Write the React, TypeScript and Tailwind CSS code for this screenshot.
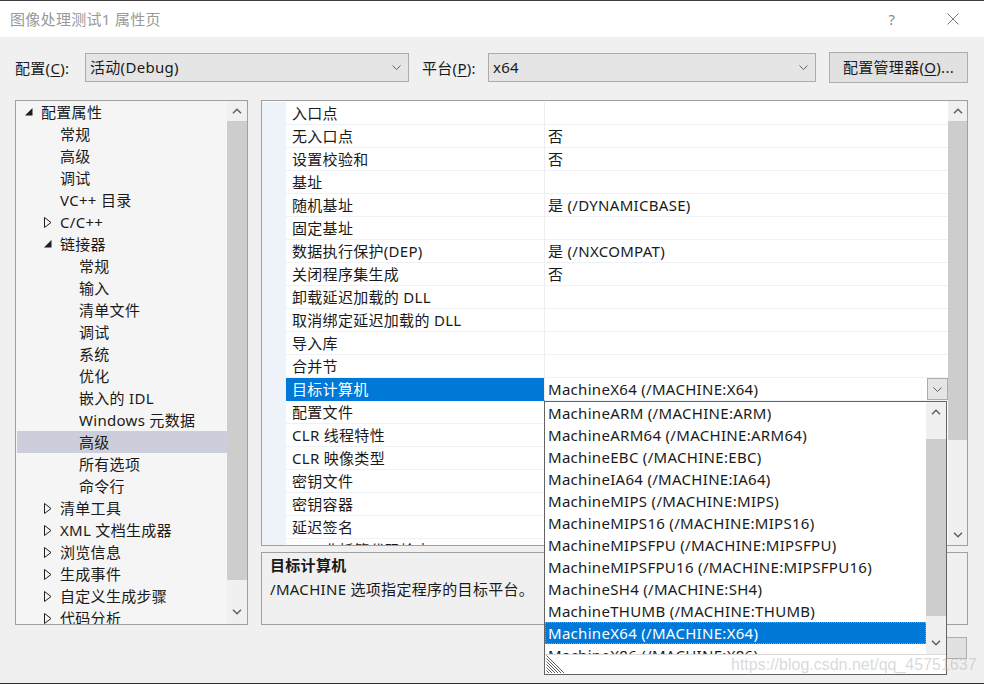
import React from "react";

const ChevUp = () => (
  <svg width="10" height="6" viewBox="0 0 10 6">
    <path d="M1 5.2 L5 1.2 L9 5.2" fill="none" stroke="#606060" strokeWidth="1.5" />
  </svg>
);
const ChevDown = () => (
  <svg width="10" height="6" viewBox="0 0 10 6">
    <path d="M1 0.8 L5 4.8 L9 0.8" fill="none" stroke="#606060" strokeWidth="1.5" />
  </svg>
);
const ThinDown = () => (
  <svg width="9" height="5" viewBox="0 0 9 5">
    <path d="M0.5 0.5 L4.5 4.5 L8.5 0.5" fill="none" stroke="#606060" strokeWidth="1" />
  </svg>
);
const TriExpanded = () => (
  <svg width="8" height="8" viewBox="0 0 8 8">
    <path d="M7.5 0 L7.5 7.5 L0 7.5 Z" fill="#1e1e1e" />
  </svg>
);
const TriCollapsed = () => (
  <svg width="8" height="11" viewBox="0 0 8 11">
    <path d="M0.5 0.5 L7 5.5 L0.5 10.5 Z" fill="none" stroke="#1e1e1e" strokeWidth="1" />
  </svg>
);

type TreeItem = { t: string; l: number; e?: "open" | "closed"; sel?: boolean };
const tree: TreeItem[] = [
  { t: "配置属性", l: 0, e: "open" },
  { t: "常规", l: 1 },
  { t: "高级", l: 1 },
  { t: "调试", l: 1 },
  { t: "VC++ 目录", l: 1 },
  { t: "C/C++", l: 1, e: "closed" },
  { t: "链接器", l: 1, e: "open" },
  { t: "常规", l: 2 },
  { t: "输入", l: 2 },
  { t: "清单文件", l: 2 },
  { t: "调试", l: 2 },
  { t: "系统", l: 2 },
  { t: "优化", l: 2 },
  { t: "嵌入的 IDL", l: 2 },
  { t: "Windows 元数据", l: 2 },
  { t: "高级", l: 2, sel: true },
  { t: "所有选项", l: 2 },
  { t: "命令行", l: 2 },
  { t: "清单工具", l: 1, e: "closed" },
  { t: "XML 文档生成器", l: 1, e: "closed" },
  { t: "浏览信息", l: 1, e: "closed" },
  { t: "生成事件", l: 1, e: "closed" },
  { t: "自定义生成步骤", l: 1, e: "closed" },
  { t: "代码分析", l: 1, e: "closed" },
];

const props: [string, string][] = [
  ["入口点", ""],
  ["无入口点", "否"],
  ["设置校验和", "否"],
  ["基址", ""],
  ["随机基址", "是 (/DYNAMICBASE)"],
  ["固定基址", ""],
  ["数据执行保护(DEP)", "是 (/NXCOMPAT)"],
  ["关闭程序集生成", "否"],
  ["卸载延迟加载的 DLL", ""],
  ["取消绑定延迟加载的 DLL", ""],
  ["导入库", ""],
  ["合并节", ""],
  ["目标计算机", "MachineX64 (/MACHINE:X64)"],
  ["配置文件", ""],
  ["CLR 线程特性", ""],
  ["CLR 映像类型", ""],
  ["密钥文件", ""],
  ["密钥容器", ""],
  ["延迟签名", ""],
  ["CLR 非托管代码检查", ""],
];

const machines = [
  "MachineARM (/MACHINE:ARM)",
  "MachineARM64 (/MACHINE:ARM64)",
  "MachineEBC (/MACHINE:EBC)",
  "MachineIA64 (/MACHINE:IA64)",
  "MachineMIPS (/MACHINE:MIPS)",
  "MachineMIPS16 (/MACHINE:MIPS16)",
  "MachineMIPSFPU (/MACHINE:MIPSFPU)",
  "MachineMIPSFPU16 (/MACHINE:MIPSFPU16)",
  "MachineSH4 (/MACHINE:SH4)",
  "MachineTHUMB (/MACHINE:THUMB)",
  "MachineX64 (/MACHINE:X64)",
  "MachineX86 (/MACHINE:X86)",
];

const levelPad = ["pl-[8px]", "pl-[27px]", "pl-[46px]"];

export default function App() {
  return (
    <div className="relative w-[984px] h-[684px] overflow-hidden bg-[#f0f0f0] border-t border-b border-t-[#3c3c3c] border-b-[#2e2e2e] font-['Noto_Sans','Noto_Sans_CJK_SC',sans-serif] text-[15px] tracking-[0.3px] text-[#1a1a1a]">
      {/* title bar */}
      <div className="h-[36px] bg-white flex items-center">
        <div className="pl-[10px] text-[#999999] leading-[20px]">图像处理测试1 属性页</div>
        <div className="flex-1" />
        <div className="w-[20px] text-center text-[#8a8a8a] mr-[45px] leading-[20px]">?</div>
        <div className="mr-[25px] flex items-center">
          <svg width="12" height="12" viewBox="0 0 12 12">
            <path d="M0.5 0.5 L11.5 11.5 M11.5 0.5 L0.5 11.5" stroke="#7a7a7a" strokeWidth="1" />
          </svg>
        </div>
      </div>

      {/* config row */}
      <div className="flex items-center h-[31px] mt-[15px] pl-[15px]">
        <div className="w-[70px] leading-[20px]">
          配置(<span className="underline underline-offset-2">C</span>):
        </div>
        <div className="w-[324px] h-[29px] bg-[#e5e5e5] border border-[#acacac] flex items-center pl-[4px] pr-[7px]">
          <span className="flex-1">活动(Debug)</span>
          <ThinDown />
        </div>
        <div className="w-[66px] ml-[13px] leading-[20px]">
          平台(<span className="underline underline-offset-2">P</span>):
        </div>
        <div className="w-[328px] h-[29px] bg-[#e5e5e5] border border-[#acacac] flex items-center pl-[4px] pr-[7px]">
          <span className="flex-1">x64</span>
          <ThinDown />
        </div>
        <div className="w-[139px] h-[31px] ml-[13px] bg-[#e1e1e1] border border-[#adadad] flex items-center justify-center">
          配置管理器(<span className="underline underline-offset-2">O</span>)...
        </div>
      </div>

      {/* main */}
      <div className="flex mt-[17px] pl-[15px] gap-[13px]">
        {/* tree */}
        <div className="w-[233px] h-[525px] border border-[#a0a0a0] bg-[#f5f5f5] flex">
          <div className="flex-1 overflow-hidden">
            {tree.map((it, i) => (
              <div
                key={i}
                className={`h-[22px] ml-[1px] flex items-center whitespace-nowrap ${levelPad[it.l]} ${it.sel ? "bg-[#cccedb]" : ""}`}
              >
                <span className="w-[16px] flex items-center">
                  {it.e === "open" ? <TriExpanded /> : it.e === "closed" ? <TriCollapsed /> : null}
                </span>
                <span className="leading-[22px]">{it.t}</span>
              </div>
            ))}
          </div>
          <div className="w-[20px] bg-[#f0f0f0] flex flex-col">
            <div className="h-[20px] flex items-center justify-center">
              <ChevUp />
            </div>
            <div className="h-[459px] bg-[#cdcdcd]" />
            <div className="flex-1" />
            <div className="h-[24px] flex items-center justify-center">
              <ChevDown />
            </div>
          </div>
        </div>

        {/* right column */}
        <div className="w-[707px] flex flex-col gap-[6px]">
          <div className="h-[446px] border border-[#a0a0a0] bg-white flex">
            <div className="flex-1 overflow-hidden pt-[1px]">
              {props.map(([n, v], i) => {
                const sel = i === 12;
                return (
                  <div key={i} className="flex h-[23px]">
                    <div className="w-[24px] bg-[#eef2f9]" />
                    <div
                      className={`w-[259px] pl-[6px] whitespace-nowrap leading-[22px] border-r border-[#ededed] ${
                        sel ? "bg-[#0078d7] text-white border-b border-b-[#0078d7]" : "border-b border-b-[#eef1f6]"
                      }`}
                    >
                      {n}
                    </div>
                    <div className="flex-1 flex border-b border-[#eef1f6] whitespace-nowrap">
                      <span className="flex-1 pl-[3px] leading-[22px]">{v}</span>
                      {sel && (
                        <div className="w-[21px] h-[22px] bg-[#e5e5e5] border border-[#acacac] flex items-center justify-center">
                          <ThinDown />
                        </div>
                      )}
                    </div>
                  </div>
                );
              })}
            </div>
            <div className="w-[19px] bg-[#f0f0f0] flex flex-col">
              <div className="h-[20px] flex items-center justify-center">
                <ChevUp />
              </div>
              <div className="h-[319px] bg-[#cdcdcd]" />
              <div className="flex-1" />
              <div className="h-[20px] flex items-center justify-center">
                <ChevDown />
              </div>
            </div>
          </div>
          <div className="h-[73px] border border-[#a0a0a0] bg-[#f0f0f0] pl-[8px] pt-[1px]">
            <div className="font-bold leading-[22px]">目标计算机</div>
            <div className="leading-[22px] mt-[2px]">/MACHINE 选项指定程序的目标平台。</div>
          </div>
        </div>
      </div>

      {/* bottom buttons */}
      <div className="flex justify-end gap-[8px] pr-[17px] mt-[12px]">
        <div className="w-[94px] h-[22px] bg-[#e1e1e1] border border-[#adadad] flex items-center justify-center">确定</div>
        <div className="w-[94px] h-[22px] bg-[#e1e1e1] border border-[#adadad] flex items-center justify-center">取消</div>
        <div className="w-[94px] h-[22px] bg-[#e1e1e1] border border-[#adadad] flex items-center justify-center text-[#9a9a9a]">
          应用(<span className="underline underline-offset-2">A</span>)
        </div>
      </div>

      {/* dropdown list overlay */}
      <div className="absolute left-[544px] top-[400px] w-[403px] h-[274px] border border-[#646464] bg-white flex flex-col">
        <div className="flex h-[252px]">
          <div className="flex-1 overflow-hidden">
            {machines.map((m, i) => {
              const sel = i === 10;
              return (
                <div
                  key={i}
                  className={`h-[22px] pl-[2px] leading-[20px] whitespace-nowrap border ${
                    sel ? "bg-[#0078d7] text-white border-dotted border-[#e08a2e]" : "border-transparent"
                  }`}
                >
                  {m}
                </div>
              );
            })}
          </div>
          <div className="w-[20px] bg-[#f0f0f0] flex flex-col">
            <div className="h-[20px] flex items-center justify-center">
              <ChevUp />
            </div>
            <div className="h-[17px]" />
            <div className="h-[177px] bg-[#cdcdcd]" />
            <div className="flex-1" />
            <div className="h-[22px] flex items-center justify-center">
              <ChevDown />
            </div>
          </div>
        </div>
        <div className="flex-1 border-t border-[#d9d9d9] flex items-end pl-[1px] pb-[1px]">
          <svg width="19" height="18" viewBox="0 0 19 18">
            <path
              d="M0.5 0.5 L18 18 M0.5 3.5 L15 18 M0.5 6.5 L12 18 M0.5 9.5 L9 18 M0.5 12.5 L6 18 M0.5 15.5 L3 18"
              stroke="#5a5a5a"
              strokeWidth="1"
              fill="none"
            />
          </svg>
        </div>
      </div>

      {/* watermark */}
      <div className="absolute left-[731px] top-[654px] text-[16px] leading-[20px] tracking-normal font-['Liberation_Sans',sans-serif] text-[rgba(185,185,185,0.55)] pointer-events-none">
        https://blog.csdn.net/qq_45751637
      </div>
    </div>
  );
}
